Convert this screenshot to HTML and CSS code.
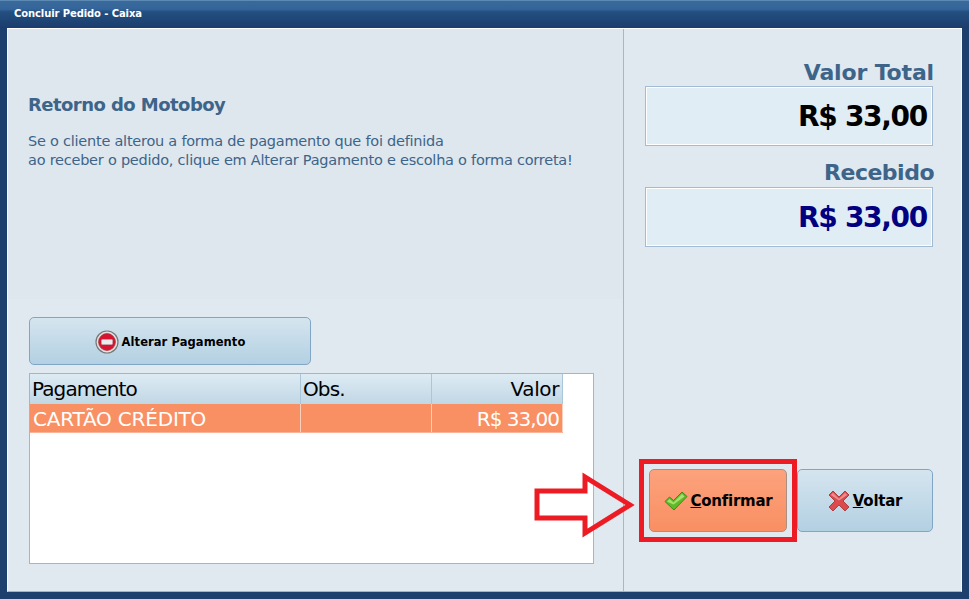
FILE: index.html
```html
<!DOCTYPE html>
<html lang="en">
<head>
  <meta charset="UTF-8">
  <title>Concluir Pedido - Caixa</title>
  <link rel="stylesheet" href="styles.css">
</head>
<body>
  <div class="window">
    <div class="titlebar">Concluir Pedido - Caixa</div>
    <div class="client">

      <div class="left">
        <div class="info">
          <div class="info_title">Retorno do Motoboy</div>
          <p class="info_text">Se o cliente alterou a forma de pagamento que foi definida<br>
          ao receber o pedido, clique em Alterar Pagamento e escolha o forma correta!</p>
        </div>
        <div class="payments">
          <button class="btn btn_alter">
            <svg width="24" height="24" viewBox="0 0 24 24">
              <circle cx="12" cy="12" r="11" fill="#e2e2e2" stroke="#777" stroke-width="1.2"/>
              <circle cx="12" cy="12" r="8.4" fill="#d8132f" stroke="#a5323f" stroke-width="0.8"/>
              <rect x="6.5" y="9.5" width="11" height="5" rx="0.8" fill="#ececec" stroke="#b5b5b5" stroke-width="0.6"/>
            </svg>
            <span>Alterar Pagamento</span>
          </button>
          <div class="grid">
            <div class="row head">
              <div class="cell col_pag">Pagamento</div>
              <div class="cell col_obs">Obs.</div>
              <div class="cell col_val">Valor</div>
            </div>
            <div class="row selected">
              <div class="cell col_pag">CARTÃO CRÉDITO</div>
              <div class="cell col_obs"></div>
              <div class="cell col_val">R$ 33,00</div>
            </div>
          </div>
        </div>
      </div>

      <div class="right">
        <div class="totals">
          <div class="total_label">Valor Total</div>
          <div class="total_box">R$ 33,00</div>
          <div class="total_label second">Recebido</div>
          <div class="total_box navy">R$ 33,00</div>
        </div>
        <div class="actions">
          <button class="btn btn_confirm">
            <svg width="24" height="22" viewBox="0 0 24 22">
              <path d="M1 11.5 L5.5 7 L9.5 10.5 L18 2 L23 6.5 L10 20 Z" fill="#5fba28" stroke="#3f8a1a" stroke-linejoin="round"/>
              <path d="M3 11.5 L5.5 9 L9.5 12.5 L18 4 L20.5 6.5 L9.5 14.5 Z" fill="#a8e070"/>
            </svg>
            <span><u>C</u>onfirmar</span>
          </button>
          <button class="btn btn_back">
            <svg width="22" height="22" viewBox="0 0 22 22">
              <path d="M1 5 L5 1 L11 7 L17 1 L21 5 L15 11 L21 17 L17 21 L11 15 L5 21 L1 17 L7 11 Z" fill="#db4a4c" stroke="#ad3f42" stroke-linejoin="round"/>
              <path d="M2.8 5 L5 2.8 L11 8.8 L17 2.8 L19.2 5 L11 10.5 Z" fill="#ee8c8c"/>
            </svg>
            <span><u>V</u>oltar</span>
          </button>
        </div>
      </div>

    </div>

    <!-- annotation drawn over the screen -->
    <div class="mark_box"></div>
    <svg class="mark_arrow" width="106" height="66" viewBox="0 0 106 66">
      <path d="M4 19 H52 V5 L97 33 L52 61 V46 H4 Z" fill="none" stroke="#ed1c24" stroke-width="5"/>
    </svg>
  </div>
</body>
</html>
```

FILE: styles.css
```css
* {
  box-sizing: border-box;
}
body {
  margin: 0;
  font-family: "DejaVu Sans", sans-serif;
}
.window {
  position: relative;
  width: 969px;
  height: 599px;
  display: flex;
  flex-direction: column;
  background: #1c3f6e;
  padding: 0 7px 7px 7px;
}
.titlebar {
  height: 28px;
  margin: 0 -7px;
  padding: 0 14px 2px;
  display: flex;
  align-items: center;
  color: #fff;
  font-size: 10px;
  font-weight: bold;
  letter-spacing: -0.1px;
  border-top: 1px solid #5d8ab4;
  background: linear-gradient(#3a6a9a 0%, #34659a 30%, #234f80 40%, #1b3d6d 100%);
}
.client {
  flex: 1;
  display: flex;
  background: #e0e8f0;
  border-top: 1px solid #fff;
  border-left: 1px solid #f4f7fa;
  border-right: 1px solid #f4f7fa;
  border-bottom: 1px solid #9db4c9;
}
.left {
  width: 615px;
  display: flex;
  flex-direction: column;
}
.info {
  height: 270px;
  padding: 64px 20px 0;
  background: #dfe7ee;
  color: #3d6489;
}
.info_title {
  font-size: 18px;
  font-weight: bold;
  letter-spacing: -0.55px;
  line-height: 24px;
}
.info_text {
  margin: 15px 0 0;
  font-size: 14.5px;
  line-height: 19px;
  letter-spacing: -0.24px;
}
.payments {
  padding: 18px 0 0 21px;
}
.btn {
  display: flex;
  align-items: center;
  justify-content: center;
  border: 1px solid #7fa6c6;
  border-radius: 5px;
  background: linear-gradient(#d5e5ef, #b3d0e2);
  color: #000;
  font-family: "DejaVu Sans", sans-serif;
  font-weight: bold;
  padding: 0;
}
.btn_alter {
  width: 282px;
  height: 48px;
  gap: 3px;
  padding-top: 1px;
  font-size: 11.5px;
  letter-spacing: 0.08px;
}
.grid {
  width: 565px;
  height: 191px;
  margin-top: 8px;
  background: #fff;
  border: 1px solid #9db8ce;
}
.row {
  display: flex;
  width: 533px;
  font-size: 20px;
}
.head {
  height: 30px;
  background: linear-gradient(#deebf3, #c0d7e5);
  color: #000;
  letter-spacing: -0.9px;
}
.selected {
  height: 29px;
  background: #f99064;
  color: #fff;
  border-bottom: 1px solid #fbb497;
  letter-spacing: -0.2px;
}
.cell {
  display: flex;
  align-items: center;
  border-right: 1px solid #a9c6da;
  padding: 0 2px;
}
.selected .cell {
  border-right-color: #fcd0bd;
  padding: 1px 3px 0;
}
.col_pag {
  width: 271px;
}
.col_obs {
  width: 131px;
}
.col_val {
  width: 131px;
  justify-content: flex-end;
}
.head .col_val {
  letter-spacing: -0.4px;
  padding-right: 3px;
}
.selected .col_val {
  letter-spacing: -1px;
}
.right {
  flex: 1;
  display: flex;
  flex-direction: column;
  justify-content: space-between;
  border-left: 1px solid #a3b8ca;
  padding: 0 28px 59px 15px;
}
.totals {
  padding: 31px 0 0 6px;
}
.total_label {
  text-align: right;
  font-size: 22px;
  font-weight: bold;
  line-height: 26px;
  letter-spacing: -0.15px;
  margin-right: -1px;
  color: #3d6489;
}
.second {
  margin-top: 12px;
  line-height: 29px;
  letter-spacing: -0.5px;
}
.total_box {
  height: 60px;
  display: flex;
  align-items: center;
  justify-content: flex-end;
  padding: 0 5px 0 0;
  font-size: 28px;
  font-weight: bold;
  letter-spacing: -1.3px;
  color: #000;
  background: #e1edf4;
  border: 1px solid #a3bbd2;
  outline: 1px solid #fff;
  outline-offset: -2px;
}
.navy {
  color: #000080;
}
.actions {
  display: flex;
  gap: 10px;
  height: 63px;
  margin-left: 10px;
}
.btn_confirm, .btn_back {
  height: 63px;
  gap: 3px;
  font-size: 15px;
  letter-spacing: -0.25px;
}
.btn_confirm {
  width: 138px;
  background: linear-gradient(#fca27c, #f98f63);
  border-color: #ad8f82;
}
.btn_back {
  width: 136px;
}
.mark_box {
  position: absolute;
  left: 639px;
  top: 459px;
  width: 158px;
  height: 83px;
  border: 5px solid #ed1c24;
}
.mark_arrow {
  position: absolute;
  left: 533px;
  top: 472px;
}
```
